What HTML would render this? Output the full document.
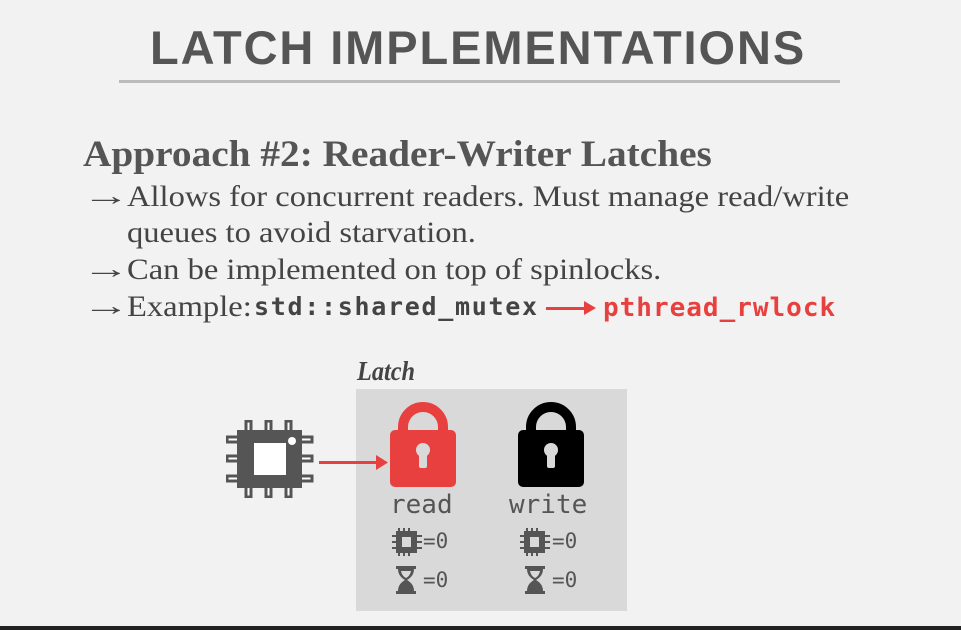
<!DOCTYPE html>
<html><head><style>
body{margin:0;width:961px;height:630px;background:#f2f2f2;position:relative;overflow:hidden;font-family:"Liberation Serif",serif;color:#444}
.a{position:absolute;white-space:nowrap}
.mono{font-family:"DejaVu Sans Mono","Liberation Mono",monospace}
.b{font-size:30px;transform:scaleX(1.085);transform-origin:left}
.r{font-size:28px;transform:scaleX(1.7);transform-origin:left}
</style></head><body>
<div class="a" style="left:150px;top:20px;font:bold 47px 'Liberation Sans',sans-serif;letter-spacing:1.9px;color:#555">LATCH IMPLEMENTATIONS</div>
<div class="a" style="left:119px;top:80px;width:721px;height:3px;background:#bbb"></div>
<div class="a" style="left:83px;top:133px;font:bold 37px 'Liberation Serif',serif;color:#555;transform:scaleX(1.063);transform-origin:left">Approach #2: Reader-Writer Latches</div>
<div class="a r" style="left:82px;top:181px">→</div>
<div class="a r" style="left:82px;top:254px">→</div>
<div class="a r" style="left:82px;top:291px">→</div>
<div class="a b" style="left:127px;top:180px">Allows for concurrent readers. Must manage read/write</div>
<div class="a b" style="left:127px;top:216px">queues to avoid starvation.</div>
<div class="a b" style="left:127px;top:253px">Can be implemented on top of spinlocks.</div>
<div class="a b" style="left:127px;top:290px">Example:</div>
<div class="a mono" style="left:254px;top:292px;font-size:25px;font-weight:bold;letter-spacing:1.7px;color:#444">std::shared_mutex</div>
<div class="a" style="left:546px;top:307px;width:40px;height:3px;background:#e8403f"></div>
<svg class="a" style="left:584px;top:301px" width="12" height="14"><path d="M0 0L12 7L0 14Z" fill="#e8403f"/></svg>
<div class="a mono" style="left:603px;top:293px;font-size:26px;font-weight:bold;color:#e8403f;letter-spacing:1px">pthread_rwlock</div>
<div class="a" style="left:357px;top:356px;font:italic bold 27px 'Liberation Serif',serif;color:#444;transform:scaleX(0.9);transform-origin:left">Latch</div>
<div class="a" style="left:356px;top:389px;width:271px;height:222px;background:#d9d9d9"></div>
<svg class="a" style="left:226px;top:420px" width="88" height="78" viewBox="0 0 88 78">
<g fill="#fff" stroke="#555" stroke-width="3">
<rect x="20" y="1" width="5" height="12"/><rect x="40" y="1" width="5" height="12"/><rect x="60" y="1" width="5" height="12"/>
<rect x="20" y="65" width="5" height="12"/><rect x="40" y="65" width="5" height="12"/><rect x="60" y="65" width="5" height="12"/>
<rect x="1" y="17" width="12" height="5"/><rect x="1" y="36" width="12" height="5"/><rect x="1" y="56" width="12" height="5"/>
<rect x="74" y="17" width="12" height="5"/><rect x="74" y="36" width="12" height="5"/><rect x="74" y="56" width="12" height="5"/></g>
<rect x="11" y="10" width="65" height="58" fill="#555"/><rect x="28" y="23" width="32" height="32" fill="#fff"/><circle cx="66" cy="21" r="4" fill="#fff"/></svg>
<div class="a" style="left:319px;top:461px;width:60px;height:3px;background:#e8403f"></div>
<svg class="a" style="left:376px;top:455px" width="12" height="15"><path d="M0 0L12 7.5L0 15Z" fill="#e8403f"/></svg>
<svg class="a" style="left:390px;top:401px" width="66" height="86" viewBox="0 0 66 86"><path d="M13 32V26A20 20 0 0 1 53 26V32" fill="none" stroke="#e8403f" stroke-width="10"/><rect x="0" y="29" width="66" height="57" rx="5" fill="#e8403f"/><circle cx="33" cy="49" r="7" fill="#d9d9d9"/><rect x="29" y="51" width="8" height="16" rx="2" fill="#d9d9d9"/></svg>
<svg class="a" style="left:518px;top:401px" width="66" height="86" viewBox="0 0 66 86"><path d="M13 32V26A20 20 0 0 1 53 26V32" fill="none" stroke="#000" stroke-width="10"/><rect x="0" y="29" width="66" height="57" rx="5" fill="#000"/><circle cx="33" cy="49" r="7" fill="#d9d9d9"/><rect x="29" y="51" width="8" height="16" rx="2" fill="#d9d9d9"/></svg>
<div class="a mono" style="left:390px;top:490px;font-size:26px;color:#555">read</div>
<div class="a mono" style="left:509px;top:490px;font-size:26px;color:#555">write</div>
<svg width="0" height="0" style="position:absolute"><defs>
<symbol id="c" viewBox="0 0 30 28"><g fill="#555"><rect x="6" y="0" width="2" height="28"/><rect x="11" y="0" width="2" height="28"/><rect x="16" y="0" width="2" height="28"/><rect x="0" y="7" width="30" height="2"/><rect x="0" y="13" width="30" height="2"/><rect x="0" y="19" width="30" height="2"/><rect x="4" y="3" width="21" height="22"/></g><rect x="10" y="9" width="9" height="10" fill="#d9d9d9"/></symbol>
<symbol id="h" viewBox="0 0 20 28"><g fill="#555"><rect x="0" y="0" width="20" height="3"/><rect x="0" y="25" width="20" height="3"/><path d="M2 3H18Q18 10 11 14Q18 18 18 25H2Q2 18 9 14Q2 10 2 3ZM5 5Q6 10 10 12Q14 10 15 5Z"/></g></symbol></defs></svg>
<svg class="a" style="left:392px;top:528px" width="30" height="28"><use href="#c"/></svg>
<svg class="a" style="left:520px;top:528px" width="30" height="28"><use href="#c"/></svg>
<svg class="a" style="left:396px;top:566px" width="20" height="28"><use href="#h"/></svg>
<svg class="a" style="left:525px;top:566px" width="20" height="28"><use href="#h"/></svg>
<div class="a mono" style="left:423px;top:529px;font-size:21px;color:#555">=0</div>
<div class="a mono" style="left:552px;top:529px;font-size:21px;color:#555">=0</div>
<div class="a mono" style="left:423px;top:568px;font-size:21px;color:#555">=0</div>
<div class="a mono" style="left:552px;top:568px;font-size:21px;color:#555">=0</div>
<div class="a" style="left:0;top:626px;width:961px;height:4px;background:#222"></div>
</body></html>
